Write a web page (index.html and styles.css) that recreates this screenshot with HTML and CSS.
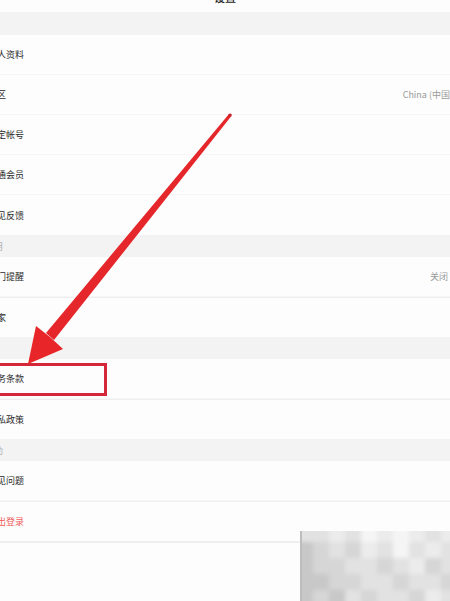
FILE: index.html
```html
<!DOCTYPE html>
<html lang="zh">
<head>
<meta charset="utf-8">
<title>设置</title>
<link rel="stylesheet" href="styles.css">
</head>
<body>
<div class="page">
  <div class="topbar"><span class="title">设置</span></div>
  <div class="gap"></div>
  <div class="group">
    <div class="row"><span class="label">个人资料</span></div>
    <div class="row"><span class="label">地区</span><span class="value china">China (中国)</span></div>
    <div class="row"><span class="label">绑定帐号</span></div>
    <div class="row"><span class="label">开通会员</span></div>
    <div class="row last"><span class="label">意见反馈</span></div>
  </div>
  <div class="gap"><span class="gap-label">通用</span></div>
  <div class="group">
    <div class="row"><span class="label">开门提醒</span><span class="value">关闭</span></div>
    <div class="row last"><span class="label">管家</span></div>
  </div>
  <div class="gap"></div>
  <div class="group">
    <div class="row"><span class="label">服务条款</span></div>
    <div class="row last"><span class="label">隐私政策</span></div>
  </div>
  <div class="gap"><span class="gap-label">帮助</span></div>
  <div class="group bottom">
    <div class="row"><span class="label">常见问题</span></div>
    <div class="row last"><span class="label logout">退出登录</span></div>
  </div>
  <div class="rest"></div>

  <div class="highlight"></div>
  <svg class="arrow" width="450" height="601" viewBox="0 0 450 601">
    <polygon fill="#e5262a" points="54,340 46,333 228.8,114.2 231.4,116.0"/>
    <circle cx="230.1" cy="115.1" r="1.7" fill="#c8232e"/>
    <polygon fill="#e8262a" points="28,364 36,326 50,337 63,349"/>
  </svg>
  <div class="mosaic-wrap">
    <div class="mosaic">
      <i class="d"></i><i class="d"></i><i class="e"></i><i class="d"></i><i class="f"></i><i class="e"></i><i class="f"></i><i class="e"></i><i class="d"></i><i class="e"></i>
      <i class="b"></i><i class="c"></i><i class="d"></i><i class="c"></i><i class="e"></i><i class="d"></i><i class="f"></i><i class="d"></i><i class="e"></i><i class="d"></i>
      <i class="b"></i><i class="c"></i><i class="c"></i><i class="d"></i><i class="d"></i><i class="c"></i><i class="d"></i><i class="e"></i><i class="c"></i><i class="d"></i>
      <i class="b"></i><i class="b"></i><i class="c"></i><i class="c"></i><i class="d"></i><i class="d"></i><i class="c"></i><i class="d"></i><i class="d"></i><i class="c"></i>
      <i class="b"></i><i class="c"></i><i class="b"></i><i class="d"></i><i class="c"></i><i class="d"></i><i class="d"></i><i class="c"></i><i class="e"></i><i class="d"></i>
    </div>
  </div>
</div>
</body>
</html>
```
FILE: styles.css
```css
* { box-sizing: border-box; }
html, body {
  margin: 0;
  padding: 0;
  width: 450px;
  height: 601px;
  overflow: hidden;
  background: #fdfdfd;
}
.page {
  position: relative;
  width: 450px;
  height: 601px;
  overflow: hidden;
  display: flex;
  flex-direction: column;
  font-family: "Noto Sans CJK SC", "Noto Sans", sans-serif;
  font-size: 9px;
  color: #2a2a2a;
}
.topbar {
  height: 12px;
  display: flex;
  justify-content: center;
  overflow: hidden;
  background: #fdfdfd;
}
.title {
  font-size: 11px;
  line-height: 11px;
  margin-top: -8px;
  color: #222;
  font-weight: 500;
}
.gap {
  height: 22px;
  background: #f3f3f3;
  display: flex;
  align-items: center;
}
.gap:nth-of-type(2) { height: 23px; }
.gap-label {
  margin-left: -15px;
  color: #b0b0b0;
  font-size: 9px;
}
.group {
  display: flex;
  flex-direction: column;
  background: #fdfdfd;
}
.row {
  height: 40px;
  display: flex;
  align-items: center;
  justify-content: space-between;
  border-bottom: 1px solid #f6f6f6;
}
.row.last { border-bottom: none; }
.group .row:first-child + .row.last { border-top: 1px solid #eeeeee; }
.group.bottom { border-bottom: 2px solid #efefef; }
.label {
  margin-left: -12px;
  white-space: nowrap;
}
.logout { color: #ee5a5a; }
.value {
  color: #9a9a9a;
  margin-right: 2px;
  white-space: nowrap;
}
.value.china { margin-right: -3px; }
.rest {
  flex: 1;
  background: #fdfdfd;
}
.highlight {
  position: absolute;
  left: -4px;
  top: 363px;
  width: 111px;
  height: 33px;
  border: 3px solid #d4283a;
}
.arrow {
  position: absolute;
  left: 0;
  top: 0;
}
.mosaic-wrap {
  position: absolute;
  left: 300px;
  top: 531px;
  width: 150px;
  height: 70px;
  overflow: hidden;
  border-left: 2px solid #bdbdbd;
  background: #dcdcdc;
}
.mosaic {
  width: 160px;
  height: 80px;
  margin: -5px 0 0 -5px;
  display: grid;
  grid-template-columns: repeat(10, 16px);
  grid-template-rows: repeat(5, 16px);
  filter: blur(2px);
}
.mosaic i { display: block; }
.mosaic .a { background: #bcbcbc; }
.mosaic .b { background: #c8c8c8; }
.mosaic .c { background: #d6d6d6; }
.mosaic .d { background: #e2e2e2; }
.mosaic .e { background: #ececec; }
.mosaic .f { background: #f5f5f5; }
```
